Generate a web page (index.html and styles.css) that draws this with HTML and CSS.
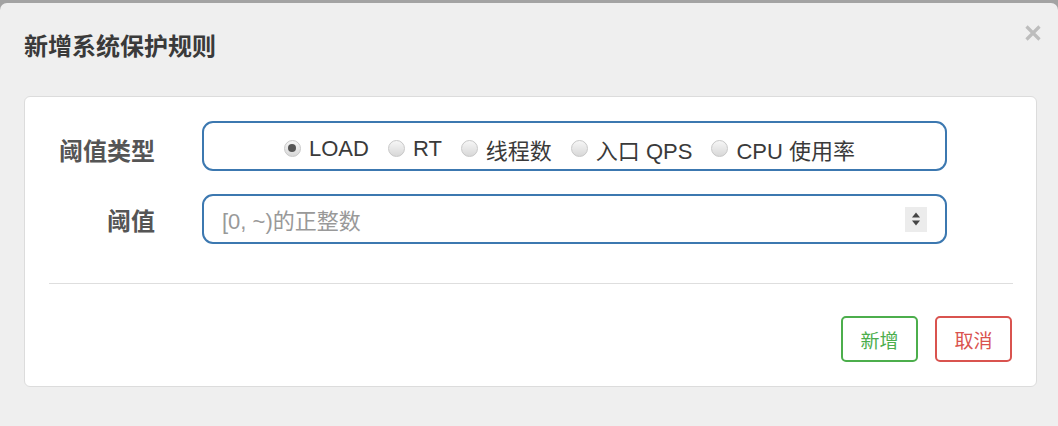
FILE: index.html
```html
<!DOCTYPE html>
<html lang="zh-CN">

<head>
    <meta charset="UTF-8">
    <meta name="viewport" content="width=device-width, initial-scale=1.0">
    <title>新增系统保护规则</title>
    <link rel="stylesheet" href="styles.css">
</head>

<body>
    <div class="dialog">
        <div class="dialog-header">
            <h3 class="dialog-title">新增系统保护规则</h3>
            <span class="close">
                <svg width="18" height="18" viewBox="0 0 18 18">
                    <path d="M2.5 2.5 L15.5 15.5 M15.5 2.5 L2.5 15.5" stroke="#bdbdbd" stroke-width="3.2" />
                </svg>
            </span>
        </div>

        <div class="dialog-body">
            <div class="card">
                <div class="form-row">
                    <label class="form-label low">阈值类型</label>
                    <div class="radio-box">
                        <label class="radio"><span class="dot checked"></span>LOAD</label>
                        <label class="radio"><span class="dot"></span>RT</label>
                        <label class="radio"><span class="dot"></span>线程数</label>
                        <label class="radio"><span class="dot"></span>入口 QPS</label>
                        <label class="radio"><span class="dot"></span>CPU 使用率</label>
                    </div>
                </div>
                <div class="form-row">
                    <label class="form-label">阈值</label>
                    <div class="number-box">
                        <span class="placeholder">[0, ~)的正整数</span>
                        <span class="spinner">
                            <svg width="10" height="16" viewBox="0 0 10 16">
                                <path d="M1 6.5 L5 1.5 L9 6.5 Z" fill="#444" />
                                <path d="M1 9.5 L5 14.5 L9 9.5 Z" fill="#444" />
                            </svg>
                        </span>
                    </div>
                </div>

                <div class="divider"></div>

                <div class="actions">
                    <button class="btn btn-add">新增</button>
                    <button class="btn btn-cancel">取消</button>
                </div>
            </div>
        </div>
    </div>
</body>

</html>
```

FILE: styles.css
```css
* {
    margin: 0;
    padding: 0;
    box-sizing: border-box;
}

body {
    width: 100%;
    height: 100vh;
    background: #a3a3a3;
    font-family: 'Liberation Sans', 'Noto Sans CJK SC', sans-serif;
    color: #333;
    overflow: hidden;
}

.dialog {
    margin-top: 3px;
    height: calc(100vh - 3px);
    background: #efefef;
    border-radius: 7px 7px 0 0;
}

/* header with title and close mark */
.dialog-header {
    display: flex;
    justify-content: space-between;
    align-items: flex-start;
    padding: 28px 16px 0 24px;
    height: 93px;
}

.dialog-title {
    font-size: 24px;
    line-height: 32px;
    font-weight: bold;
    color: #3a3a3a;
}

.close {
    display: flex;
    margin-top: -7px;
}

.dialog-body {
    padding: 0 21px 0 24px;
}

.card {
    background: #fff;
    border: 1px solid #dcdcdc;
    border-radius: 6px;
    padding: 24px 0 24px 0;
}

.form-row {
    display: grid;
    grid-template-columns: 130px 745px;
    column-gap: 47px;
    align-items: center;
    margin-bottom: 23px;
}

.form-label {
    text-align: right;
    font-size: 24px;
    font-weight: bold;
    color: #555;
}

.form-label.low {
    padding-top: 6px;
}

.radio-box,
.number-box {
    height: 50px;
    border: 2px solid #3c78b0;
    border-radius: 11px;
    display: flex;
    align-items: center;
}

.radio-box {
    justify-content: center;
    gap: 19px;
    padding: 6px 10px 0 0;
}

.radio {
    display: flex;
    align-items: center;
    gap: 8px;
    font-size: 22px;
    color: #3a3a3a;
}

.dot {
    width: 17px;
    height: 17px;
    border-radius: 50%;
    border: 1px solid #c8c8c8;
    background: linear-gradient(#f6f6f6, #d8d8d8);
    position: relative;
    margin-top: -2px;
}

.dot.checked::after {
    content: '';
    position: absolute;
    top: 3.5px;
    left: 3.5px;
    width: 8px;
    height: 8px;
    border-radius: 50%;
    background: #555;
}

.number-box {
    justify-content: space-between;
    padding: 0 18px 0 18px;
}

.placeholder {
    font-size: 22px;
    color: #999;
}

.spinner {
    width: 22px;
    height: 25px;
    background: #ececec;
    display: flex;
    align-items: center;
    justify-content: center;
}

.divider {
    height: 1px;
    background: #dedede;
    margin: 39px 23px 32px 24px;
}

.actions {
    display: flex;
    justify-content: flex-end;
    gap: 17px;
    padding-right: 24px;
}

.btn {
    width: 77px;
    height: 46px;
    background: #fff;
    border-radius: 5px;
    font-family: 'Noto Sans CJK SC', sans-serif;
    font-size: 19px;
}

.btn-add {
    border: 2px solid #4cae4c;
    color: #4cae4c;
}

.btn-cancel {
    border: 2px solid #d9534f;
    color: #d9534f;
}
```
